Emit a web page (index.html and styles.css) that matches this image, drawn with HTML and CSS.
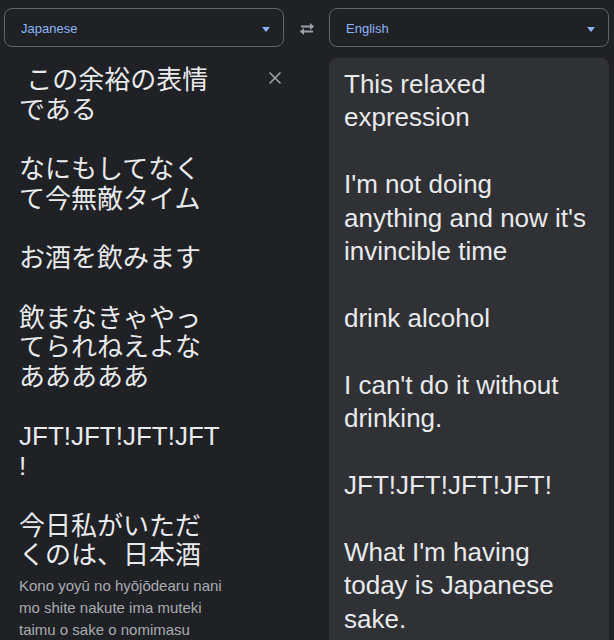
FILE: index.html
```html
<!DOCTYPE html>
<html lang="ja">
<head>
<meta charset="utf-8">
<link rel="stylesheet" href="styles.css">
</head>
<body>
<div class="app">
  <div class="lang-bar">
    <div class="select"><span class="select-label">Japanese</span><span class="caret"></span></div>
    <div class="swap">
      <svg width="18" height="14" viewBox="0 0 18 14"><path d="M3 4.5h10" stroke="#9aa0a6" stroke-width="2" fill="none"/><path d="M12 1l4.2 3.5L12 8z" fill="#9aa0a6"/><path d="M15 9.5H5" stroke="#9aa0a6" stroke-width="2" fill="none"/><path d="M6 6L1.8 9.5 6 13z" fill="#9aa0a6"/></svg>
    </div>
    <div class="select"><span class="select-label">English</span><span class="caret"></span></div>
  </div>
  <div class="panes">
    <div class="source">
      <div class="source-top">
        <div class="source-text"> この余裕の表情である

なにもしてなくて今無敵タイム

お酒を飲みます

飲まなきゃやってられねえよなあああああ

JFT!JFT!JFT!JFT!

今日私がいただくのは、日本酒</div>
        <button class="clear" aria-label="clear">
          <svg width="14" height="14" viewBox="0 0 14 14"><path d="M1.5 1.5l11 11M12.5 1.5l-11 11" stroke="#9aa0a6" stroke-width="1.7" fill="none"/></svg>
        </button>
      </div>
      <div class="romaji">Kono yoyū no hyōjōdearu nani mo shite nakute ima muteki taimu o sake o nomimasu</div>
    </div>
    <div class="target">
      <div class="target-text">This relaxed expression

I'm not doing anything and now it's invincible time

drink alcohol

I can't do it without drinking.

JFT!JFT!JFT!JFT!

What I'm having today is Japanese sake.</div>
    </div>
  </div>
</div>
</body>
</html>
```

FILE: styles.css
```css
html, body {
  margin: 0;
  padding: 0;
  background: #202124;
  height: 100%;
  overflow: hidden;
}
.app {
  font-family: "Liberation Sans", Arial, "Noto Sans CJK JP", sans-serif;
  color: #e8eaed;
}
.lang-bar {
  display: flex;
  align-items: center;
  padding: 8px 5px 0 4px;
}
.select {
  box-sizing: border-box;
  width: 280px;
  height: 39px;
  border: 1px solid #5f6368;
  border-radius: 8px;
  display: flex;
  align-items: center;
  justify-content: space-between;
  padding: 1px 13px 0 16px;
  color: #8ab4f8;
  font-size: 13px;
}
.caret {
  width: 0;
  height: 0;
  border-left: 4.5px solid transparent;
  border-right: 4.5px solid transparent;
  border-top: 5px solid #8ab4f8;
  margin-top: 3px;
}
.swap {
  width: 45px;
  display: flex;
  justify-content: center;
  padding-top: 2px;
}
.panes {
  display: flex;
  padding: 11px 5px 0 4px;
}
.source {
  width: 280px;
  padding-top: 8px;
}
.source-top {
  display: flex;
}
.source-text {
  width: 202px;
  padding-left: 15px;
  font-size: 26px;
  line-height: 29.7px;
  white-space: pre-wrap;
  overflow-wrap: break-word;
  font-family: "Liberation Sans", "Noto Sans CJK JP", sans-serif;
}
.clear {
  margin-left: auto;
  margin-right: 1px;
  background: none;
  border: 0;
  padding: 0;
  width: 16px;
  height: 16px;
  margin-top: 4px;
  display: flex;
  align-items: center;
  justify-content: center;
}
.romaji {
  padding: 4px 0 0 15px;
  width: 214px;
  font-size: 15px;
  line-height: 22px;
  color: #a8acb1;
}
.target {
  margin-left: 45px;
  width: 280px;
  box-sizing: border-box;
  background: #303134;
  border-radius: 8px;
  padding: 10px 15px 20px 15px;
  min-height: 600px;
}
.target-text {
  font-size: 26px;
  line-height: 33.4px;
  white-space: pre-wrap;
}
```
